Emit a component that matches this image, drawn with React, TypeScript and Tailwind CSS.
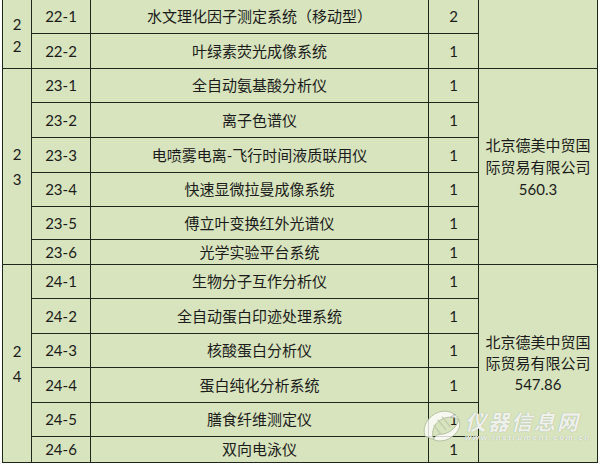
const rows = [
  { id: "22-1", name: "水文理化因子测定系统（移动型）", qty: "2" },
  { id: "22-2", name: "叶绿素荧光成像系统", qty: "1" },
  { id: "23-1", name: "全自动氨基酸分析仪", qty: "1" },
  { id: "23-2", name: "离子色谱仪", qty: "1" },
  { id: "23-3", name: "电喷雾电离-飞行时间液质联用仪", qty: "1" },
  { id: "23-4", name: "快速显微拉曼成像系统", qty: "1" },
  { id: "23-5", name: "傅立叶变换红外光谱仪", qty: "1" },
  { id: "23-6", name: "光学实验平台系统", qty: "1" },
  { id: "24-1", name: "生物分子互作分析仪", qty: "1" },
  { id: "24-2", name: "全自动蛋白印迹处理系统", qty: "1" },
  { id: "24-3", name: "核酸蛋白分析仪", qty: "1" },
  { id: "24-4", name: "蛋白纯化分析系统", qty: "1" },
  { id: "24-5", name: "膳食纤维测定仪", qty: "1" },
  { id: "24-6", name: "双向电泳仪", qty: "1" },
];

const rowStart = [
  "row-start-1",
  "row-start-2",
  "row-start-3",
  "row-start-4",
  "row-start-5",
  "row-start-6",
  "row-start-7",
  "row-start-8",
  "row-start-9",
  "row-start-10",
  "row-start-11",
  "row-start-12",
  "row-start-13",
  "row-start-14",
];

const cell =
  "bg-[#d7e4bd] flex items-center justify-center text-center text-[15px] text-[#1b1b1b]";

// site watermark in the lower right corner
function Watermark() {
  return (
    <div className="pointer-events-none absolute left-[419px] top-[405px] flex items-center">
      <svg width="46" height="42" viewBox="0 0 44 40" className="opacity-80">
        <path
          d="M6 30 C2 20 10 8 22 6 C30 5 36 9 38 14 C32 10 24 11 18 16 C13 21 12 27 14 33 Z"
          fill="#ffffff"
          stroke="#a9b597"
          strokeWidth="0.9"
        />
        <path
          d="M14 33 C20 36 30 34 36 26 C39 22 40 18 38 14 C36 22 28 28 20 28 C17 28 15 30 14 33 Z"
          fill="#ffffff"
          stroke="#a9b597"
          strokeWidth="0.9"
        />
        <path d="M18 14 L26 24 M22 11 L30 21 M14 19 L21 28" stroke="#bcc6aa" strokeWidth="1.3" />
      </svg>
      <div className="flex flex-col">
        <span
          className="text-[21px] font-bold italic leading-[22px] tracking-[2px] text-white/85 [text-shadow:0_0_1px_#8e9a7e]"
          style={{ fontFamily: '"Noto Sans CJK SC", sans-serif' }}
        >
          仪器信息网
        </span>
        <span
          className="mt-[1px] text-[8px] italic font-bold leading-[10px] tracking-[1.6px] text-white/85 [text-shadow:0_0_1px_#8e9a7e]"
          style={{ fontFamily: '"Liberation Sans", sans-serif' }}
        >
          www.instrument.com.cn
        </span>
      </div>
    </div>
  );
}

export default function App() {
  return (
    <div
      className="relative h-[464px] w-[600px] overflow-hidden bg-white pl-[2px]"
      style={{ fontFamily: 'Lato, "Noto Sans CJK SC", sans-serif' }}
    >
      <div className="grid w-[596px] grid-cols-[28px_58px_337px_49px_118px] grid-rows-[33px_34px_33px_34px_34px_33px_32px_24px_33px_34px_33px_34px_33px_25px] gap-px border-x border-b border-[#1f271d] bg-[#1f271d]">
        <div className={`${cell} col-start-1 row-start-1 row-span-2 flex-col leading-[22px] pt-[2px]`}>
          <span>2</span>
          <span>2</span>
        </div>
        <div className={`${cell} col-start-1 row-start-3 row-span-6 flex-col leading-[25px]`}>
          <span>2</span>
          <span>3</span>
        </div>
        <div className={`${cell} col-start-1 row-start-9 row-span-6 flex-col leading-[25px]`}>
          <span>2</span>
          <span>4</span>
        </div>

        {rows.map((r, i) => (
          <div key={r.id} className="contents">
            <div className={`${cell} col-start-2 ${rowStart[i]}`}>{r.id}</div>
            <div className={`${cell} col-start-3 ${rowStart[i]}`}>{r.name}</div>
            <div className={`${cell} col-start-4 ${rowStart[i]}`}>{r.qty}</div>
          </div>
        ))}

        <div className={`${cell} col-start-5 row-start-1 row-span-2`} />
        <div className={`${cell} col-start-5 row-start-3 row-span-6 flex-col leading-[22px]`}>
          <span>北京德美中贸国</span>
          <span>际贸易有限公司</span>
          <span>560.3</span>
        </div>
        <div className={`${cell} col-start-5 row-start-9 row-span-6 flex-col leading-[21px]`}>
          <span>北京德美中贸国</span>
          <span>际贸易有限公司</span>
          <span>547.86</span>
        </div>
      </div>
      <Watermark />
    </div>
  );
}
